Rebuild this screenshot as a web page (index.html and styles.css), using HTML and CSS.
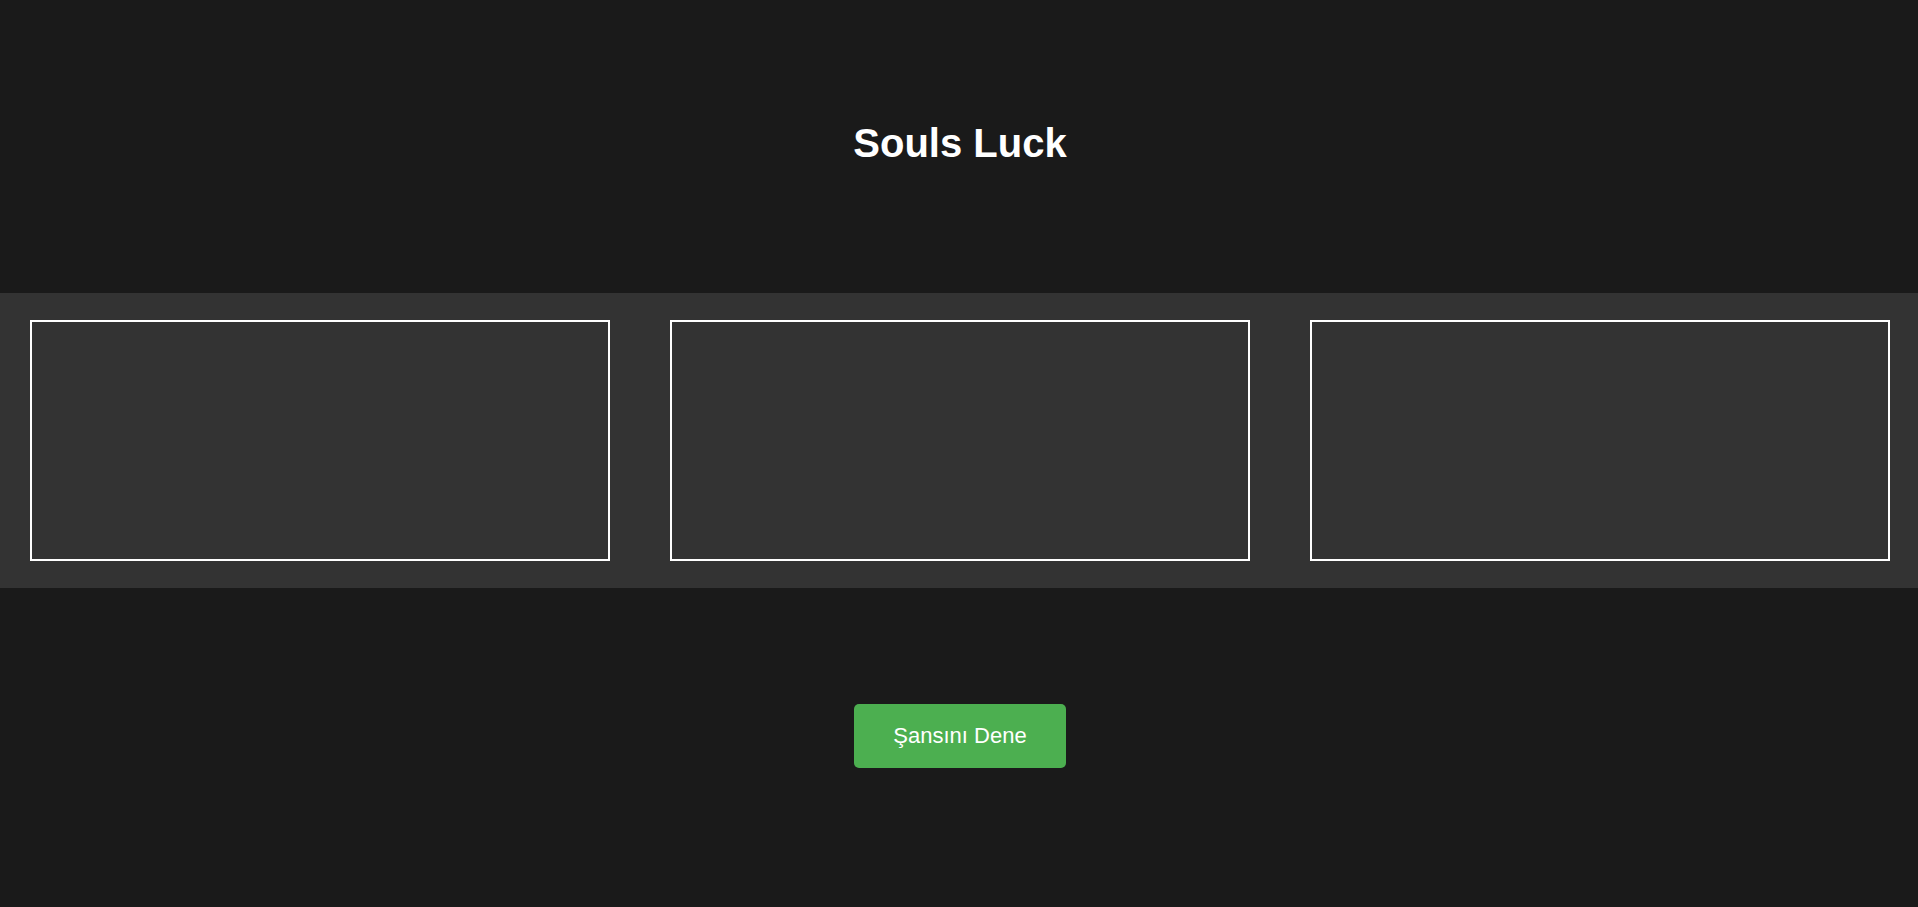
FILE: index.html
```html
<!DOCTYPE html>
<html lang="tr">
<head>
<meta charset="utf-8">
<title>Souls Luck</title>
<link rel="stylesheet" href="styles.css">
</head>
<body>
<header class="header">
  <h1 class="title">Souls Luck</h1>
</header>
<section class="band">
  <div class="slot"></div>
  <div class="slot"></div>
  <div class="slot"></div>
</section>
<div class="actions">
  <button class="try-btn">Şansını Dene</button>
</div>
</body>
</html>
```
FILE: styles.css
```css
html, body {
  margin: 0;
  padding: 0;
  background: #1a1a1a;
  font-family: "Liberation Sans", Arial, sans-serif;
  color: #fff;
}
.header {
  height: 293px;
  box-sizing: border-box;
  padding-top: 121px;
  padding-left: 2px;
  display: flex;
  justify-content: center;
}
.title {
  margin: 0;
  font-size: 40px;
  line-height: 45px;
  font-weight: bold;
  color: #fff;
}
.band {
  background: #333;
  display: flex;
  gap: 60px;
  padding: 27px 28px 27px 30px;
  height: 295px;
  box-sizing: border-box;
}
.slot {
  flex: 1;
  border: 2px solid #fff;
  background: #333;
}
.actions {
  display: flex;
  justify-content: center;
  padding-top: 116px;
  padding-left: 2px;
}
.try-btn {
  width: 212px;
  height: 64px;
  background: #4caf50;
  color: #fff;
  border: none;
  border-radius: 5px;
  font-family: "Liberation Sans", Arial, sans-serif;
  font-size: 22px;
  line-height: 24px;
  padding: 0;
  cursor: pointer;
}
```
